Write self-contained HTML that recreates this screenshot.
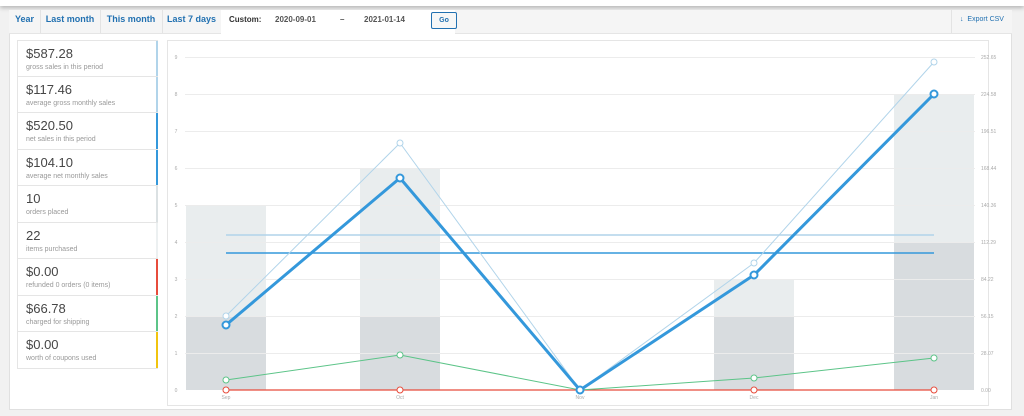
<!DOCTYPE html>
<html><head><style>
body{margin:0;width:1024px;height:416px;background:#f1f1f1;font-family:"Liberation Sans",sans-serif;position:relative;overflow:hidden}
.top{position:absolute;left:0;top:0;width:1024px;height:6px;background:#fff;box-shadow:0 2px 4px rgba(0,0,0,.25)}
.box{position:absolute;left:9px;top:10px;width:1003px;height:400px;background:#fff;border:1px solid #e0e0e0;box-sizing:border-box}
.tabs{position:absolute;left:9px;top:10px;width:1003px;height:23px;background:#f5f5f5;border-bottom:1px solid #e5e5e5;font-size:9px;font-weight:bold}
.tab{position:absolute;top:0;height:23px;line-height:19px;color:#2271b1;border-right:1px solid #e3e3e3;text-align:center}
.cust{position:absolute;left:212px;top:0;width:234px;height:24px;background:#fff;font-size:8px;color:#555;line-height:19px}
.go{position:absolute;left:210px;top:2px;width:24px;height:15px;border:1px solid #2271b1;border-radius:2px;background:#f6f7f7;color:#2271b1;text-align:center;line-height:15px;font-size:7px}
.exp{position:absolute;right:0;top:0;width:60px;height:23px;border-left:1px solid #e3e3e3;color:#2271b1;font-size:7px;font-weight:normal;line-height:19px;text-align:center}
.left{position:absolute;left:17px;top:40px;width:141px}
.row{height:36.5px;border:1px solid #e5e5e5;border-top:none;box-sizing:border-box;padding:5px 0 0 8px;position:relative;background:#fff;font-size:7px}
.row:first-child{border-top:1px solid #e5e5e5}
.row b{display:block;font-weight:normal;font-size:13px;line-height:15px;color:#464646}
.row span{display:block;font-size:7px;line-height:10px;margin-top:2px;color:#999}
.row i{position:absolute;right:-1px;top:0;bottom:0;width:2px}
.chart{position:absolute;left:167px;top:40px;width:822px;height:366px;border:1px solid #e5e5e5;box-sizing:border-box}
</style></head><body>
<div class="top"></div>
<div class="box"></div>
<div class="tabs">
<div class="tab" style="left:0;width:31px">Year</div>
<div class="tab" style="left:31px;width:60px">Last month</div>
<div class="tab" style="left:91px;width:62px">This month</div>
<div class="tab" style="left:153px;width:59px">Last 7 days</div>
<div class="cust"><span style="position:absolute;left:8px;font-weight:bold;color:#333;font-size:8px">Custom:</span><span style="position:absolute;left:54px">2020-09-01</span><span style="position:absolute;left:119px">–</span><span style="position:absolute;left:143px">2021-01-14</span><div class="go">Go</div></div>
<div class="exp">↓&nbsp; Export CSV</div>
</div>
<div class="left">
<div class="row"><b>$587.28</b><span>gross sales in this period</span><i style="background:#b1d4ea"></i></div>
<div class="row"><b>$117.46</b><span>average gross monthly sales</span><i style="background:#b1d4ea"></i></div>
<div class="row"><b>$520.50</b><span>net sales in this period</span><i style="background:#3498db"></i></div>
<div class="row"><b>$104.10</b><span>average net monthly sales</span><i style="background:#3498db"></i></div>
<div class="row"><b>10</b><span>orders placed</span><i style="background:#dbe1e3"></i></div>
<div class="row"><b>22</b><span>items purchased</span><i style="background:#ecf0f1"></i></div>
<div class="row"><b>$0.00</b><span>refunded 0 orders (0 items)</span><i style="background:#e74c3c"></i></div>
<div class="row"><b>$66.78</b><span>charged for shipping</span><i style="background:#5cc488"></i></div>
<div class="row"><b>$0.00</b><span>worth of coupons used</span><i style="background:#f1c40f"></i></div>
</div>
<div class="chart"></div>
<svg style="position:absolute;left:0;top:0" width="1024" height="416" font-family="Liberation Sans" font-size="5" fill="#aaa">
<g fill="#e9edee"><rect x="186" y="205" width="80" height="185"/><rect x="360" y="168" width="80" height="222"/><rect x="714" y="279" width="80" height="111"/><rect x="894" y="94" width="80" height="296"/></g>
<g fill="#d8dcdf"><rect x="186" y="316" width="80" height="74"/><rect x="360" y="316" width="80" height="74"/><rect x="714" y="316" width="80" height="74"/><rect x="894" y="242" width="80" height="148"/></g>
<g stroke="#ececec" stroke-width="1">
<line x1="185" x2="975" y1="57.5" y2="57.5"/><line x1="185" x2="975" y1="94.5" y2="94.5"/><line x1="185" x2="975" y1="131.5" y2="131.5"/><line x1="185" x2="975" y1="168.5" y2="168.5"/><line x1="185" x2="975" y1="205.5" y2="205.5"/><line x1="185" x2="975" y1="242.5" y2="242.5"/><line x1="185" x2="975" y1="279.5" y2="279.5"/><line x1="185" x2="975" y1="316.5" y2="316.5"/><line x1="185" x2="975" y1="353.5" y2="353.5"/></g>
<g text-anchor="middle"><text x="176" y="59">9</text><text x="176" y="96">8</text><text x="176" y="133">7</text><text x="176" y="170">6</text><text x="176" y="207">5</text><text x="176" y="244">4</text><text x="176" y="281">3</text><text x="176" y="318">2</text><text x="176" y="355">1</text><text x="176" y="392">0</text>
<text x="226" y="399">Sep</text><text x="400" y="399">Oct</text><text x="580" y="399">Nov</text><text x="754" y="399">Dec</text><text x="934" y="399">Jan</text></g>
<g><text x="981" y="59">252.65</text><text x="981" y="96">224.58</text><text x="981" y="133">196.51</text><text x="981" y="170">168.44</text><text x="981" y="207">140.36</text><text x="981" y="244">112.29</text><text x="981" y="281">84.22</text><text x="981" y="318">56.15</text><text x="981" y="355">28.07</text><text x="981" y="392">0.00</text></g>
<line x1="226" x2="934" y1="235" y2="235" stroke="#b1d4ea" stroke-width="1.5"/>
<line x1="226" x2="934" y1="253" y2="253" stroke="#3498db" stroke-width="1.5"/>
<polyline points="226,390 400,390 580,390 754,390 934,390" fill="none" stroke="#e74c3c" stroke-width="1.2"/>
<polyline points="226,380 400,355 580,390 754,378 934,358" fill="none" stroke="#5cc488" stroke-width="1"/>
<polyline points="226,316 400,143 580,390 754,263 934,62" fill="none" stroke="#b1d4ea" stroke-width="1"/>
<polyline points="226,325 400,178 580,390 754,275 934,94" fill="none" stroke="#3498db" stroke-width="3"/>
<g fill="#fff" stroke="#e74c3c" stroke-width="1"><circle cx="226" cy="390" r="3"/><circle cx="400" cy="390" r="3"/><circle cx="754" cy="390" r="3"/><circle cx="934" cy="390" r="3"/></g>
<g fill="#fff" stroke="#5cc488" stroke-width="1"><circle cx="226" cy="380" r="3"/><circle cx="400" cy="355" r="3"/><circle cx="754" cy="378" r="3"/><circle cx="934" cy="358" r="3"/></g>
<g fill="#fff" stroke="#b1d4ea" stroke-width="1"><circle cx="226" cy="316" r="3"/><circle cx="400" cy="143" r="3"/><circle cx="754" cy="263" r="3"/><circle cx="934" cy="62" r="3"/></g>
<g fill="#fff" stroke="#3498db" stroke-width="2"><circle cx="226" cy="325" r="3.5"/><circle cx="400" cy="178" r="3.5"/><circle cx="580" cy="390" r="3.5"/><circle cx="754" cy="275" r="3.5"/><circle cx="934" cy="94" r="3.5"/></g>
</svg>
</body></html>
